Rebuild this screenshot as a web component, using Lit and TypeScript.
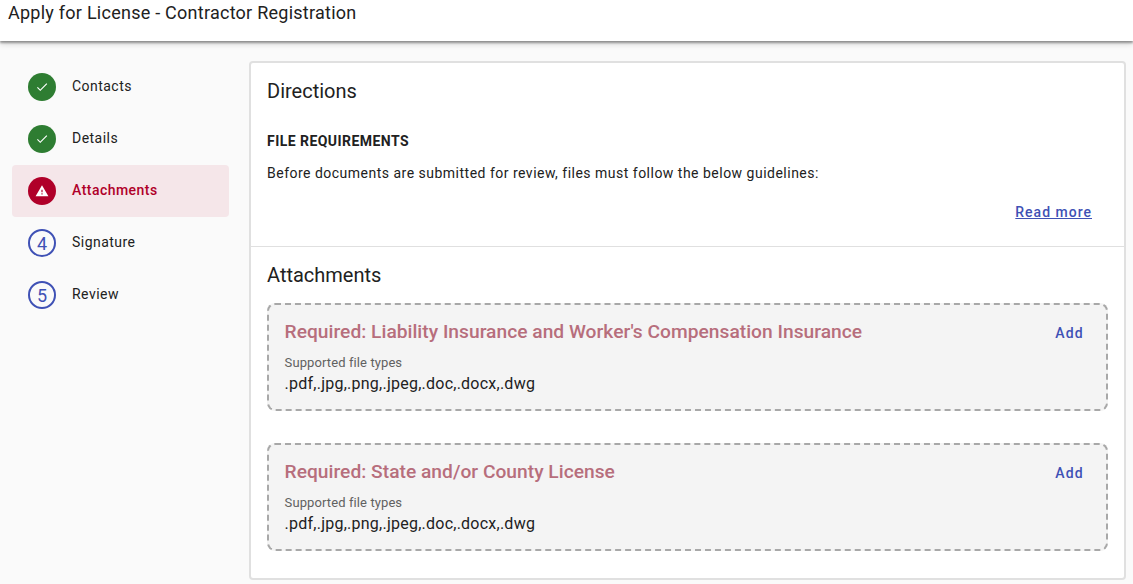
import { LitElement, html, css, svg } from "lit";
import { customElement } from "lit/decorators.js";

const check = svg`<svg width="14" height="14" viewBox="0 0 24 24" fill="#fff"><path d="M9 16.17 4.83 12l-1.42 1.41L9 19 21 7l-1.41-1.41z"/></svg>`;
const warn = svg`<svg width="14" height="14" viewBox="0 0 24 24" fill="#fff"><path d="M1 21h22L12 2 1 21zm12-3h-2v-2h2v2zm0-4h-2v-4h2v4z"/></svg>`;

const steps = [
  { label: "Contacts", kind: "done" },
  { label: "Details", kind: "done" },
  { label: "Attachments", kind: "error" },
  { label: "Signature", kind: "num", n: 4 },
  { label: "Review", kind: "num", n: 5 },
];
const attachments = ["Required: Liability Insurance and Worker's Compensation Insurance", "Required: State and/or County License"];

@customElement("app-root")
export class AppRoot extends LitElement {
  static styles = css`
    :host { display: block; width: 1133px; height: 584px; overflow: hidden; background: #fafafa; font-family: Roboto, sans-serif; color: #212121; }
    .top { height: 41px; background: #fff; box-shadow: 0 2px 2px rgba(0,0,0,.35), 0 3px 6px rgba(0,0,0,.15); padding-left: 8px; font-size: 18px; line-height: 26px; letter-spacing: .25px; position: relative; }
    .body { display: flex; padding: 20px 7px 0 12px; gap: 20px; }
    .steps { width: 217px; flex: none; }
    .step { height: 52px; display: flex; align-items: center; gap: 16px; padding-left: 16px; border-radius: 4px; font-size: 14px; letter-spacing: .47px; }
    .lbl { padding-bottom: 2px; }
    .step.error { background: #f5e6e9; color: #b00029; font-weight: 500; }
    .ic { width: 28px; height: 28px; border-radius: 50%; display: flex; align-items: center; justify-content: center; box-sizing: border-box; flex: none; }
    .done .ic { background: #2e7d32; }
    .error .ic { background: #b00029; }
    .num .ic { border: 2px solid #3f51b5; color: #3f51b5; font-size: 18px; letter-spacing: 0; }
    .card { flex: 1; height: 519px; box-sizing: border-box; background: #fff; border: 2px solid #e0e0e0; border-radius: 4px; }
    .dir { height: 184px; box-sizing: border-box; padding: 15px 16px 0; border-bottom: 1px solid #e0e0e0; }
    h2 { margin: 0; font-size: 20px; font-weight: 400; line-height: 26px; letter-spacing: 0; }
    .req { margin-top: 27px; font-size: 14px; font-weight: 700; line-height: 20px; letter-spacing: .45px; }
    .p { margin-top: 12px; font-size: 14px; line-height: 20px; letter-spacing: .49px; }
    .more { display: flex; justify-content: flex-end; padding: 19px 16px 0 0; }
    .link { color: #3f51b5; font-size: 14px; font-weight: 500; line-height: 20px; letter-spacing: 1px; text-decoration: underline; }
    .att { padding: 15px 16px 0; }
    .box { height: 108px; box-sizing: border-box; margin-top: 15px; margin-bottom: 32px; background: #f4f4f4; border: 2px dashed #a8a8a8; border-radius: 8px; padding: 14px 16px 0 15.6px; position: relative; }
    .box + .box { margin-top: 0; }
    .box-row { display: flex; justify-content: space-between; align-items: flex-start; }
    .title { color: #b76e7c; font-size: 19.2px; font-weight: 500; line-height: 26px; letter-spacing: .02px; }
    .add { color: #3f51b5; font-size: 14px; font-weight: 500; line-height: 20px; letter-spacing: 1.25px; padding: 4px 6px 0 0; }
    .sup { margin-top: 10px; font-size: 13px; line-height: 16px; color: #616161; letter-spacing: .1px; }
    .types { margin-top: 3px; font-size: 16px; line-height: 20px; letter-spacing: .24px; }
  `;

  render() {
    return html`
      <div class="top">Apply for License - Contractor Registration</div>
      <div class="body">
        <nav class="steps">
          ${steps.map(s => html`<div class="step ${s.kind}">
            <span class="ic">${s.kind === "done" ? check : s.kind === "error" ? warn : s.n}</span>
            <span class="lbl">${s.label}</span>
          </div>`)}
        </nav>
        <main class="card">
          <section class="dir">
            <h2>Directions</h2>
            <div class="req">FILE REQUIREMENTS</div>
            <div class="p">Before documents are submitted for review, files must follow the below guidelines:</div>
            <div class="more"><a class="link">Read more</a></div>
          </section>
          <section class="att">
            <h2>Attachments</h2>
            ${attachments.map(a => html`<div class="box">
              <div class="box-row"><span class="title">${a}</span><span class="add">Add</span></div>
              <div class="sup">Supported file types</div>
              <div class="types">.pdf,.jpg,.png,.jpeg,.doc,.docx,.dwg</div>
            </div>`)}
          </section>
        </main>
      </div>
    `;
  }
}
